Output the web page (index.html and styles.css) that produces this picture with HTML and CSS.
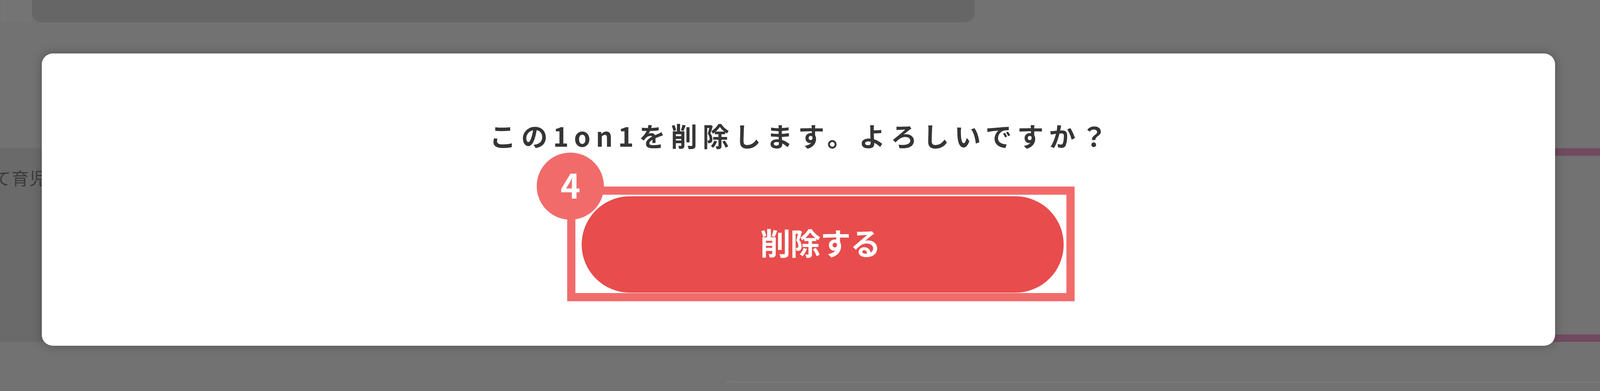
FILE: index.html
```html
<!DOCTYPE html>
<html lang="ja">
<head>
<meta charset="utf-8">
<title>1on1 削除確認</title>
<link rel="stylesheet" href="styles.css">
</head>
<body>
<div class="page">
  <div class="topbar">
    <div class="topbar-side"><span class="topbar-rule"></span></div>
    <div class="topbar-main"></div>
  </div>
  <div class="band">
    <div class="band-left"><span class="band-text">て育児</span></div>
    <div class="band-right"></div>
  </div>
  <div class="footer-dots"></div>
</div>

<div class="modal">
  <p class="modal-title">この1on1を削除します。よろしいですか？</p>
  <div class="target">
    <span class="step-badge">4</span>
    <button class="delete-btn" type="button">削除する</button>
  </div>
</div>
</body>
</html>
```

FILE: styles.css
```css
html, body {
  margin: 0;
  padding: 0;
}

body {
  width: 100vw;
  height: 1002px;
  overflow: hidden;
  position: relative;
  background: #727272;
  font-family: "Noto Sans CJK JP", "Noto Sans", sans-serif;
}

.page {
  display: flex;
  flex-direction: column;
  width: 100%;
  height: 100%;
}

.topbar {
  display: flex;
  height: 57px;
}

.topbar-side {
  width: 2vw;
  background: #747474;
  display: flex;
}

.topbar-rule {
  margin-left: 0.2vw;
  border-left: 2px dotted #7e7e7e;
}

.topbar-main {
  width: 58.92vw;
  background: #666666;
  border-radius: 0 0 24px 24px;
}

.band {
  display: flex;
  margin-top: 323px;
  height: 496px;
}

.band-left {
  width: 9vw;
  background: #6a6a6a;
  padding-top: 53px;
  box-sizing: border-box;
  overflow: hidden;
}

.band-text {
  display: block;
  margin-left: -0.4vw;
  font-size: 44px;
  line-height: 44px;
  letter-spacing: 2px;
  color: #3b3b3b;
  white-space: nowrap;
}

.band-right {
  flex: 1;
  border-top: 19px solid #704a5e;
  border-bottom: 19px solid #704a5e;
}

.footer-dots {
  margin-top: 102px;
  margin-left: 45.4vw;
  border-top: 3px dotted #7e7e7e;
}

.modal {
  position: absolute;
  left: 2.611vw;
  right: 2.816vw;
  top: 137px;
  height: 749px;
  box-sizing: border-box;
  padding-top: 176px;
  background: #ffffff;
  border-radius: 28px;
  box-shadow: 0 0 26px rgba(0, 0, 0, 0.28);
  display: flex;
  flex-direction: column;
  align-items: center;
}

.modal-title {
  --ls: calc((38.71vw - 1304px) / 21);
  margin: 0;
  padding-left: var(--ls);
  font-size: 68px;
  line-height: 68px;
  font-weight: 700;
  letter-spacing: var(--ls);
  color: #353535;
  white-space: nowrap;
}

.target {
  position: relative;
  box-sizing: border-box;
  width: 31.7vw;
  margin-top: 97px;
  margin-left: 2.816vw;
  border: 21px solid #f26b6b;
  padding: 4px 0.16vw 1px 0.386vw;
}

.step-badge {
  position: absolute;
  left: -99px;
  top: -108px;
  width: 172px;
  height: 172px;
  border-radius: 50%;
  background: #f26b6b;
  color: #ffffff;
  font-size: 86px;
  line-height: 1;
  font-weight: 700;
  display: flex;
  align-items: center;
  justify-content: center;
  padding-bottom: 10px;
  box-sizing: border-box;
}

.delete-btn {
  display: flex;
  align-items: center;
  justify-content: center;
  width: 100%;
  height: 247px;
  box-sizing: border-box;
  padding: 0 12px 14px 0;
  border: none;
  border-radius: 124px;
  background: #e84c4c;
  color: #ffffff;
  font-family: "Noto Sans CJK JP", "Noto Sans", sans-serif;
  font-size: 78px;
  line-height: 1;
  font-weight: 700;
  letter-spacing: -1px;
}
```
